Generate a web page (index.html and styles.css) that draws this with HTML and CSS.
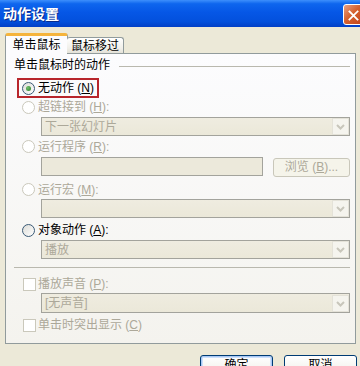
FILE: index.html
```html
<!DOCTYPE html>
<html>
  <head>
    <meta charset="utf-8">
    <link rel="stylesheet" href="styles.css">
  </head>
  <body>
    <div class="dialog">
      <div class="titlebar">
        <span class="title">动作设置</span>
        <span class="close-btn">
          <svg width="21" height="21" viewBox="0 0 21 21">
            <path d="M6 6 L15 15 M15 6 L6 15" stroke="#fff" stroke-width="2" stroke-linecap="square" />
          </svg>
        </span>
      </div>

      <div class="tabs">
        <div class="tab active">单击鼠标</div>
        <div class="tab">鼠标移过</div>
      </div>

      <div class="panel">
        <div class="group-label">
          <span>单击鼠标时的动作</span>
          <div class="rule"></div>
        </div>

        <div class="opt row-none">
          <span class="focus-box">
            <span class="radio checked"></span>
            <span>无动作 (<u>N</u>)</span>
          </span>
        </div>

        <div class="opt row-link disabled">
          <span class="radio"></span>
          <span>超链接到 (<u>H</u>):</span>
        </div>
        <div class="combo row-dd1">
          <span class="combo-text">下一张幻灯片</span>
          <span class="combo-arrow">
            <svg width="15" height="15" viewBox="0 0 15 15">
              <path d="M4 6 L7.5 9.5 L11 6" fill="none" stroke="#c8c6bb" stroke-width="2" />
            </svg>
          </span>
        </div>

        <div class="opt row-prog disabled">
          <span class="radio"></span>
          <span>运行程序 (<u>R</u>):</span>
        </div>
        <div class="input-row">
          <div class="text-box"></div>
          <div class="browse-btn">浏览 (<u>B</u>)...</div>
        </div>

        <div class="opt row-macro disabled">
          <span class="radio"></span>
          <span>运行宏 (<u>M</u>):</span>
        </div>
        <div class="combo row-dd3">
          <span class="combo-text"></span>
          <span class="combo-arrow">
            <svg width="15" height="15" viewBox="0 0 15 15">
              <path d="M4 6 L7.5 9.5 L11 6" fill="none" stroke="#c8c6bb" stroke-width="2" />
            </svg>
          </span>
        </div>

        <div class="opt row-object">
          <span class="radio enabled"></span>
          <span>对象动作 (<u>A</u>):</span>
        </div>
        <div class="combo row-dd4">
          <span class="combo-text">播放</span>
          <span class="combo-arrow">
            <svg width="15" height="15" viewBox="0 0 15 15">
              <path d="M4 6 L7.5 9.5 L11 6" fill="none" stroke="#c8c6bb" stroke-width="2" />
            </svg>
          </span>
        </div>

        <div class="separator"></div>

        <div class="opt row-sound disabled">
          <span class="checkbox"></span>
          <span>播放声音 (<u>P</u>):</span>
        </div>
        <div class="combo row-dd5">
          <span class="combo-text">[无声音]</span>
          <span class="combo-arrow">
            <svg width="15" height="15" viewBox="0 0 15 15">
              <path d="M4 6 L7.5 9.5 L11 6" fill="none" stroke="#c8c6bb" stroke-width="2" />
            </svg>
          </span>
        </div>

        <div class="opt row-highlight disabled">
          <span class="checkbox"></span>
          <span>单击时突出显示 (<u>C</u>)</span>
        </div>
      </div>

      <div class="buttons">
        <div class="btn default">确定</div>
        <div class="btn">取消</div>
      </div>
    </div>
  </body>
</html>
```

FILE: styles.css
```css
html,
body {
  margin: 0;
  padding: 0;
}

body {
  width: 360px;
  height: 366px;
  overflow: hidden;
  background: #ece9d8;
  font-family: "Liberation Sans", "Noto Sans CJK SC", sans-serif;
  font-size: 12px;
  line-height: 14px;
  color: #000;
}

.dialog {
  width: 360px;
  height: 366px;
  overflow: hidden;
}

/* Title bar */
.titlebar {
  height: 27px;
  display: flex;
  align-items: center;
  justify-content: space-between;
  padding-left: 3px;
  background: linear-gradient(
    to bottom,
    #3d8ffc 0%,
    #0e66ee 14%,
    #0657e6 45%,
    #0350dc 80%,
    #023fc6 100%
  );
}

.title {
  color: #fff;
  font-weight: bold;
  font-size: 14px;
  letter-spacing: 0;
  text-shadow: 1px 1px 0 #0a2b8a;
}

.close-btn {
  width: 21px;
  height: 21px;
  margin-right: -4px;
  margin-top: 1px;
  box-sizing: border-box;
  border: 1px solid #fff;
  border-radius: 3px;
  background: linear-gradient(135deg, #e9a184 0%, #d5612f 45%, #c2431a 100%);
  display: flex;
}

/* Tabs */
.tabs {
  display: flex;
  align-items: flex-end;
  margin-top: 6px;
  margin-left: 5px;
  margin-bottom: -1px;
  position: relative;
  z-index: 1;
  height: 21px;
}

.tab {
  box-sizing: border-box;
  border: 1px solid #919b9c;
  border-bottom: none;
  border-radius: 3px 3px 0 0;
  text-align: center;
}

.tab.active {
  width: 63px;
  height: 21px;
  background: #fcfcfe;
  border-top: 3px solid #f5b43c;
  line-height: 18px;
  padding-bottom: 1px;
}

.tab:not(.active) {
  width: 57px;
  height: 16px;
  margin-bottom: 1px;
  margin-left: -1px;
  border-left: none;
  background: linear-gradient(to bottom, #ffffff, #f0efe9 70%, #e4e2d8);
  line-height: 16px;
}

/* Tab page */
.panel {
  box-sizing: border-box;
  width: 351px;
  height: 291px;
  margin-left: 5px;
  border: 1px solid #919b9c;
  background: linear-gradient(to bottom, #fcfcfe, #f4f3ee);
  padding: 0 5px 0 8px;
}

.group-label {
  display: flex;
  align-items: center;
  height: 14px;
  margin-top: 4px;
}

.rule {
  flex: 1;
  height: 1px;
  margin-left: 9px;
  margin-top: 3px;
  background: #b9b8ae;
}

.opt {
  display: flex;
  align-items: center;
  padding-left: 8px;
}

.opt.disabled {
  color: #aca899;
}

.focus-box {
  display: flex;
  align-items: center;
  box-sizing: border-box;
  height: 20px;
  margin-left: -5px;
  padding: 0 3px 0 3px;
  border: 2px solid #b8262c;
}

.radio {
  width: 13px;
  height: 13px;
  box-sizing: border-box;
  border: 1px solid #cac8bb;
  border-radius: 50%;
  background: #fff;
  margin-right: 3px;
  flex: none;
  display: flex;
  align-items: center;
  justify-content: center;
}

.radio.enabled,
.radio.checked {
  border-color: #3a5a76;
  background: linear-gradient(135deg, #dcdcd7, #ffffff);
}

.radio.checked::after {
  content: "";
  width: 5px;
  height: 5px;
  border-radius: 50%;
  background: radial-gradient(circle at 35% 35%, #6fbf6c, #2c7f2a);
}

.checkbox {
  width: 13px;
  height: 13px;
  box-sizing: border-box;
  border: 1px solid #cac8bb;
  background: #fff;
  margin-left: 1px;
  margin-right: 2px;
  flex: none;
}

.combo {
  display: flex;
  align-items: center;
  justify-content: space-between;
  box-sizing: border-box;
  height: 19px;
  margin-left: 27px;
  border: 1px solid #a3a39c;
  background: linear-gradient(to bottom, #efece0, #ebe8d9);
  color: #aca899;
}

.combo-text {
  padding-left: 3px;
}

.combo-arrow {
  width: 17px;
  height: 17px;
  box-sizing: border-box;
  border: 1px solid #e4e2d8;
  background: #f5f4ee;
  display: flex;
  align-items: center;
  justify-content: center;
}

.input-row {
  display: flex;
  align-items: flex-start;
  height: 20px;
  margin-left: 27px;
}

.text-box {
  width: 222px;
  height: 19px;
  box-sizing: border-box;
  border: 1px solid #a3a39c;
  background: #ece9db;
}

.browse-btn {
  margin-left: auto;
  margin-top: 1px;
  width: 77px;
  height: 19px;
  box-sizing: border-box;
  border: 1px solid #c9c7ba;
  border-radius: 3px;
  background: #f5f4ea;
  color: #aca899;
  text-align: center;
  line-height: 17px;
}

.separator {
  height: 1px;
  margin-top: 8px;
  background: #b9b8ae;
}

/* Row spacing */
.row-none {
  height: 20px;
  margin-top: 6px;
}

.row-link {
  height: 18px;
}

.row-dd1 {
  margin-top: 1px;
}

.row-prog {
  height: 21px;
}

.row-macro {
  height: 19px;
  margin-top: 3px;
}

.row-object {
  height: 20px;
  margin-top: 2px;
}

.row-sound {
  height: 18px;
  margin-top: 7px;
}

.row-dd5 {
  height: 20px;
}

.row-highlight {
  height: 20px;
  margin-top: 2px;
}

/* Dialog buttons */
.buttons {
  display: flex;
  justify-content: flex-end;
  gap: 11px;
  margin-top: 11px;
  padding-right: 3px;
}

.btn {
  width: 73px;
  height: 23px;
  box-sizing: border-box;
  border: 1px solid #003c74;
  border-radius: 3px;
  background: linear-gradient(to bottom, #ffffff, #f3f2ec 70%, #d6d0c5);
  text-align: center;
  padding-top: 2px;
  line-height: 14px;
}

.btn.default {
  box-shadow: inset 0 0 0 1px #a8c8f4, inset 0 0 0 2px #cfe1fb;
}
```
